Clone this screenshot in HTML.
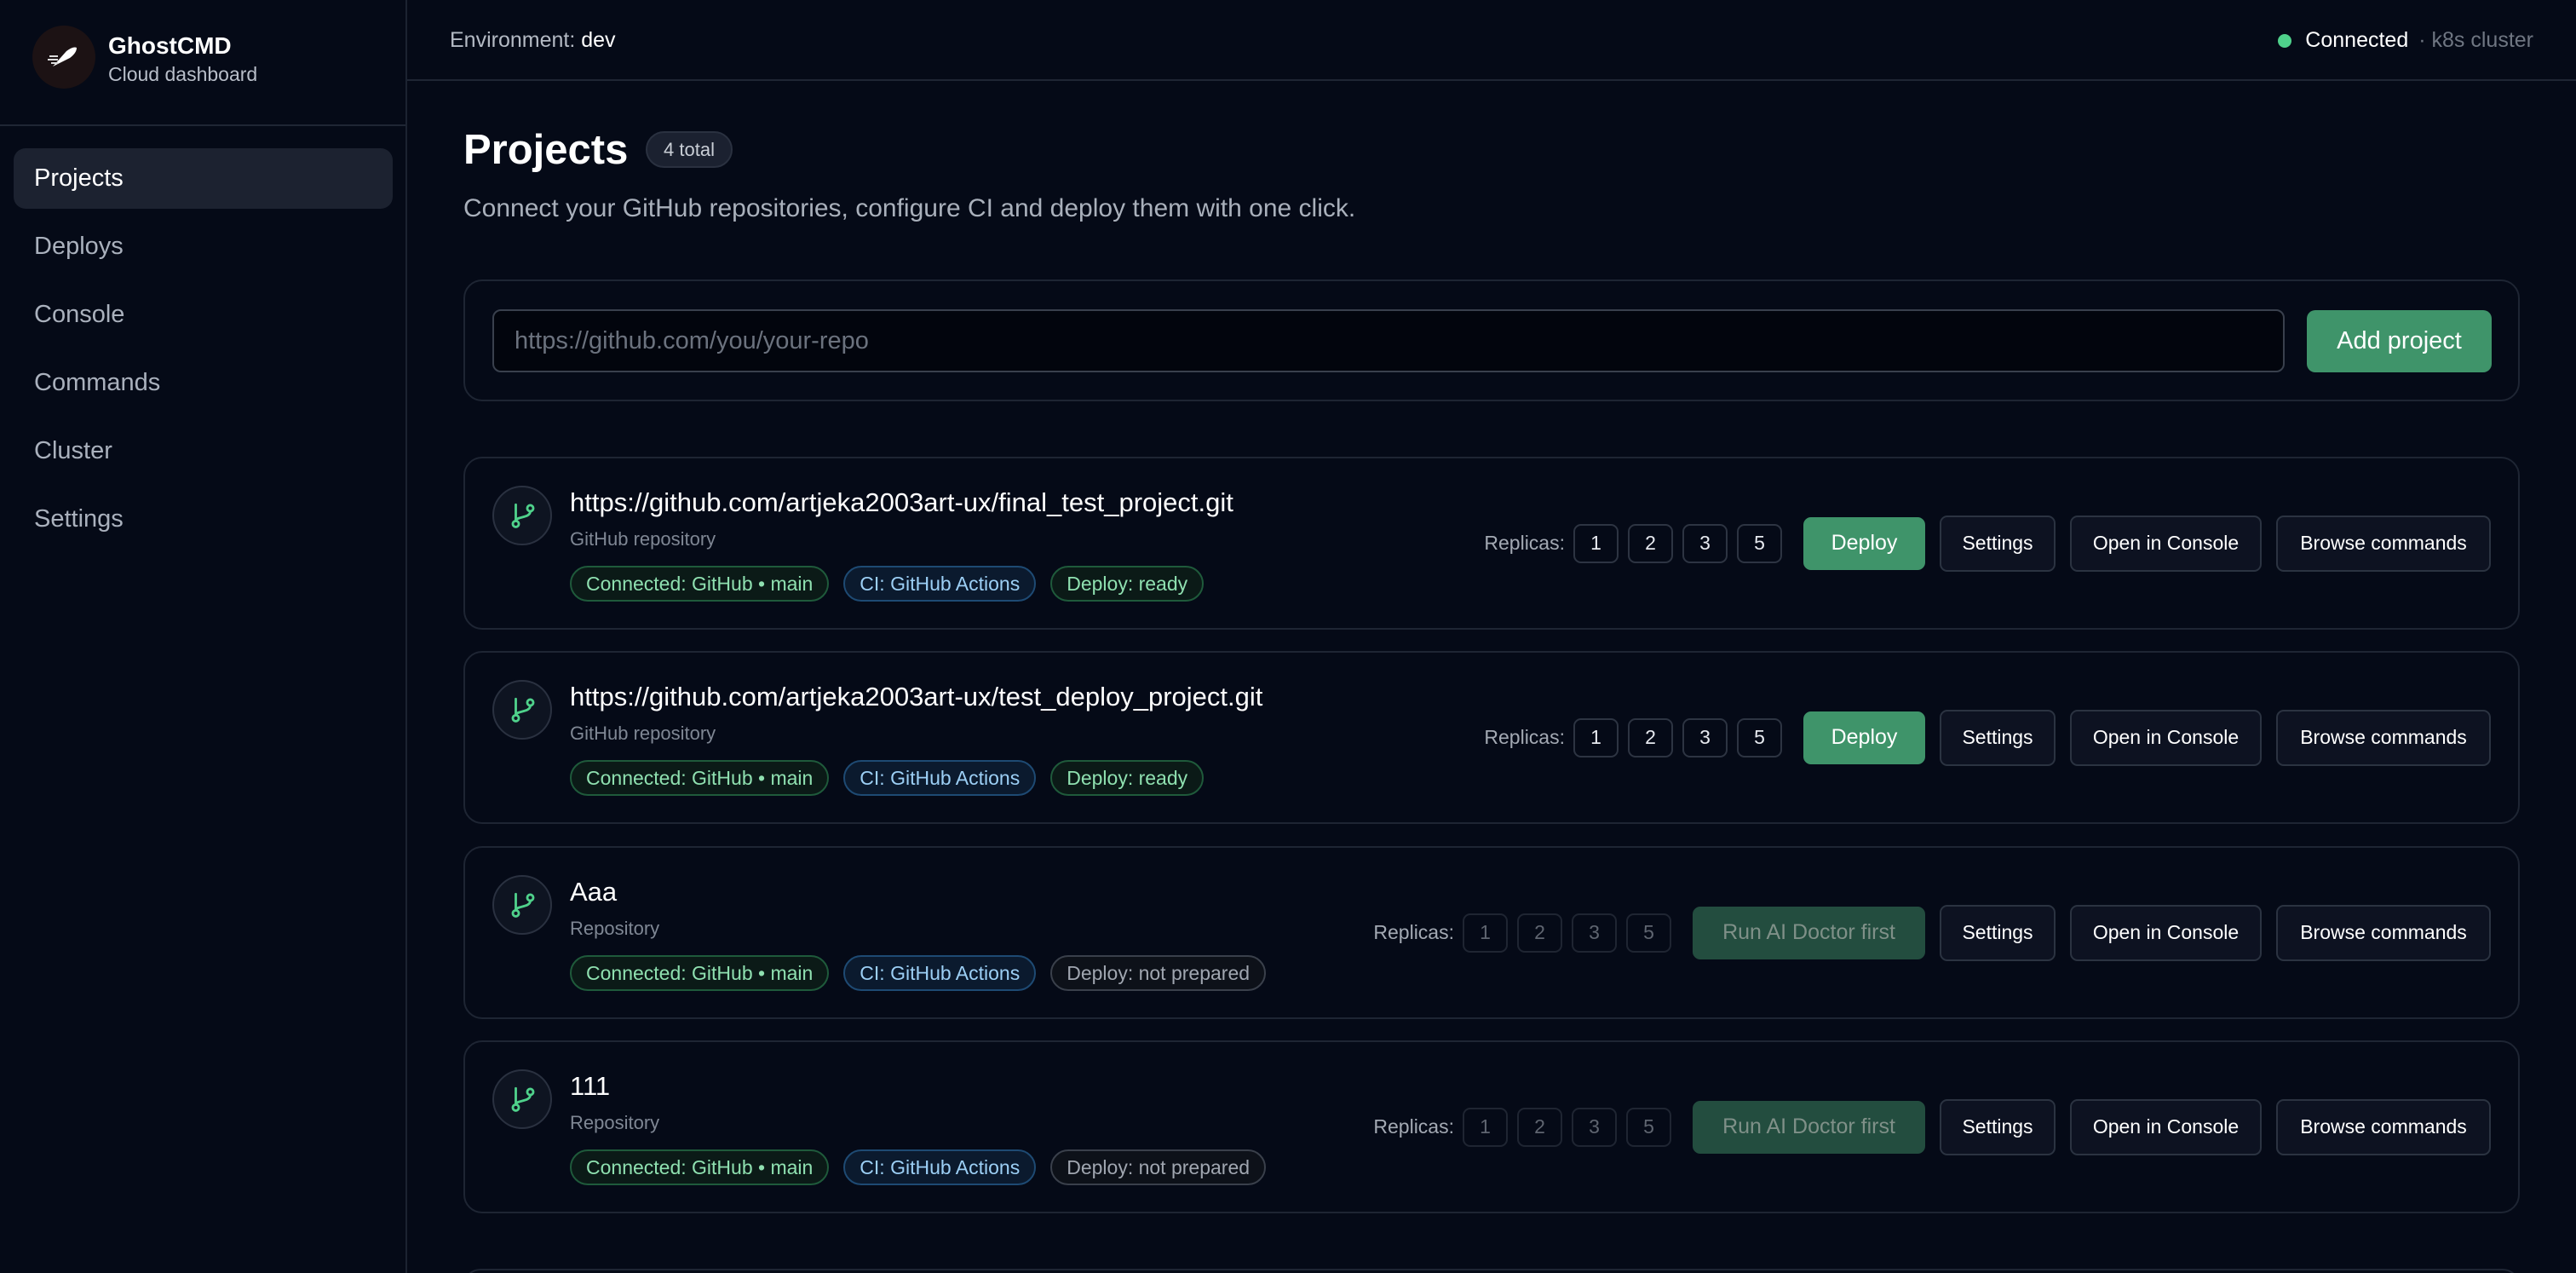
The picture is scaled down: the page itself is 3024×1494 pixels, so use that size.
<!DOCTYPE html>
<html><head><meta charset="utf-8"><style>
*{box-sizing:border-box;margin:0;padding:0}
html,body{width:3024px;height:1494px;overflow:hidden}
body{background:#050a17;font-family:"Liberation Sans",sans-serif;color:#e6e9ef;position:relative}
#wrap{position:absolute;left:0;top:0;width:3024px;height:1494px;overflow:hidden}
.side{position:absolute;left:0;top:0;width:478px;height:1494px;border-right:2px solid #1c2331;background:#050a17}
.brand{height:148px;border-bottom:2px solid #1f2634;position:relative}
.logo{position:absolute;left:38px;top:30px;width:74px;height:74px;border-radius:50%;background:#1c1214}
.bn{position:absolute;left:127px;top:38px;font-size:28px;font-weight:bold;color:#fff}
.bs{position:absolute;left:127px;top:74px;font-size:23px;color:#b8bec9}
.nav{position:absolute;left:40px;font-size:29px;color:#aab1bd}
.act{position:absolute;left:16px;top:174px;width:445px;height:71px;background:#1c2230;border-radius:14px}
.top{position:absolute;left:478px;top:0;right:0;height:95px;border-bottom:2px solid #1f2634}
.main{position:absolute;left:544px;}
.card{position:absolute;left:544px;width:2414px;border:2px solid #1e2533;border-radius:22px}
.pc{height:203px}
.ic{position:absolute;left:32px;top:32px;width:70px;height:70px;border-radius:50%;border:2px solid #2a3140;background:#0e1421}
.ic svg{position:absolute;left:17px;top:16px}
.t{position:absolute;left:123px;top:34px;font-size:31px;color:#fff}
.st{position:absolute;left:123px;top:82px;font-size:22px;color:#7f8794}
.tags{position:absolute;left:123px;top:126px;display:flex;gap:17px}
.tag{height:42px;border-radius:21px;padding:0 17px;font-size:23px;line-height:38px;border:2px solid}
.g{color:#8fe0b0;border-color:#1f5a3b;background:#0b1a17}
.b{color:#9ccff5;border-color:#1e4a73;background:#0b1a2e}
.n{color:#a0a6b0;border-color:#3a404b;background:#0d1119}
.acts{position:absolute;right:32px;top:0;height:100%;display:flex;align-items:center}
.rl{font-size:23px;color:#a3a9b3;margin-right:10px}
.r{width:53px;height:46px;border:2px solid #2d3442;border-radius:9px;font-size:23px;display:flex;align-items:center;justify-content:center;margin-right:11px;color:#e6e9ef}
.dis .r{color:#5f6570;border-color:#1f2532}
.btn{height:66px;border-radius:9px;font-size:23px;display:flex;align-items:center;justify-content:center;border:2px solid #2b3341;background:#0d1221;color:#fff;margin-left:17px}
.dep{background:#3f946a;border-color:#3f946a;font-size:25px;width:143px;margin-left:14px;height:62px}
.ai{background:#234d3f;border-color:#234d3f;color:#7f9088;font-size:25px;width:273px;margin-left:14px;height:62px}
</style></head><body><div id="wrap">
<div class="side">
 <div class="brand"><div class="logo"><svg width="74" height="74" viewBox="0 0 74 74"><path d="M24 48 L40 30 Q48 24 52 26 Q52 32 44 38 Z" fill="#fff"/><path d="M20 36h10M18 40h12M22 44h8" stroke="#ddd" stroke-width="2"/></svg></div>
 <div class="bn">GhostCMD</div><div class="bs">Cloud dashboard</div></div>
 <div class="act"></div>
 <div class="nav" style="top:193px;color:#fff">Projects</div>
 <div class="nav" style="top:273px">Deploys</div>
 <div class="nav" style="top:353px">Console</div>
 <div class="nav" style="top:433px">Commands</div>
 <div class="nav" style="top:513px">Cluster</div>
 <div class="nav" style="top:593px">Settings</div>
</div>
<div class="top">
 <div style="position:absolute;left:50px;top:33px;font-size:25px;color:#b4bac4">Environment: <span style="color:#fff">dev</span></div>
 <div style="position:absolute;right:50px;top:33px;font-size:25px;color:#fff;display:flex;align-items:center"><span style="width:16px;height:16px;border-radius:50%;background:#4fd18b;margin-right:16px;display:inline-block"></span>Connected<span style="color:#6f7682;margin-left:12px">· k8s cluster</span></div>
</div>
<div class="main" style="top:148px;font-size:49px;font-weight:bold;color:#fff">Projects</div>
<div style="position:absolute;left:758px;top:154px;width:102px;height:43px;border-radius:22px;background:#1b2130;border:2px solid #2a3140;font-size:22px;color:#c9ced6;text-align:center;line-height:39px">4 total</div>
<div class="main" style="top:228px;font-size:30px;color:#a9b0bb">Connect your GitHub repositories, configure CI and deploy them with one click.</div>
<div class="card" style="top:328px;height:143px">
 <div style="position:absolute;left:32px;top:33px;width:2104px;height:74px;border:2px solid #39404d;border-radius:10px;background:#02050d;font-size:29px;color:#6b727e;padding-left:24px;line-height:70px">https://github.com/you/your-repo</div>
 <div style="position:absolute;left:2162px;top:34px;width:217px;height:73px;border-radius:10px;background:#3f946a;color:#fff;font-size:29px;text-align:center;line-height:73px">Add project</div>
</div>

<div class="card pc" style="top:536px">
 <div class="ic"><svg width="34" height="34" viewBox="0 0 24 24" fill="none" stroke="#4fd18b" stroke-width="2" stroke-linecap="round"><circle cx="6" cy="19" r="2.5"/><circle cx="18" cy="6" r="2.5"/><path d="M6 3v13.5M18 8.5c0 6-12 4-12 8"/></svg></div>
 <div class="t">https://github.com/artjeka2003art-ux/final_test_project.git</div>
 <div class="st">GitHub repository</div>
 <div class="tags"><div class="tag g">Connected: GitHub • main</div><div class="tag b">CI: GitHub Actions</div><div class="tag g">Deploy: ready</div></div>
 <div class="acts"><span class="rl">Replicas:</span><div class="r">1</div><div class="r">2</div><div class="r">3</div><div class="r">5</div><div class="btn dep">Deploy</div><div class="btn" style="width:136px">Settings</div><div class="btn" style="width:225px">Open in Console</div><div class="btn" style="width:252px">Browse commands</div></div>
</div>
<div class="card pc" style="top:764px">
 <div class="ic"><svg width="34" height="34" viewBox="0 0 24 24" fill="none" stroke="#4fd18b" stroke-width="2" stroke-linecap="round"><circle cx="6" cy="19" r="2.5"/><circle cx="18" cy="6" r="2.5"/><path d="M6 3v13.5M18 8.5c0 6-12 4-12 8"/></svg></div>
 <div class="t">https://github.com/artjeka2003art-ux/test_deploy_project.git</div>
 <div class="st">GitHub repository</div>
 <div class="tags"><div class="tag g">Connected: GitHub • main</div><div class="tag b">CI: GitHub Actions</div><div class="tag g">Deploy: ready</div></div>
 <div class="acts"><span class="rl">Replicas:</span><div class="r">1</div><div class="r">2</div><div class="r">3</div><div class="r">5</div><div class="btn dep">Deploy</div><div class="btn" style="width:136px">Settings</div><div class="btn" style="width:225px">Open in Console</div><div class="btn" style="width:252px">Browse commands</div></div>
</div>
<div class="card pc" style="top:993px">
 <div class="ic"><svg width="34" height="34" viewBox="0 0 24 24" fill="none" stroke="#4fd18b" stroke-width="2" stroke-linecap="round"><circle cx="6" cy="19" r="2.5"/><circle cx="18" cy="6" r="2.5"/><path d="M6 3v13.5M18 8.5c0 6-12 4-12 8"/></svg></div>
 <div class="t">Aaa</div>
 <div class="st">Repository</div>
 <div class="tags"><div class="tag g">Connected: GitHub • main</div><div class="tag b">CI: GitHub Actions</div><div class="tag n">Deploy: not prepared</div></div>
 <div class="acts dis"><span class="rl">Replicas:</span><div class="r">1</div><div class="r">2</div><div class="r">3</div><div class="r">5</div><div class="btn ai">Run AI Doctor first</div><div class="btn" style="width:136px">Settings</div><div class="btn" style="width:225px">Open in Console</div><div class="btn" style="width:252px">Browse commands</div></div>
</div>
<div class="card pc" style="top:1221px">
 <div class="ic"><svg width="34" height="34" viewBox="0 0 24 24" fill="none" stroke="#4fd18b" stroke-width="2" stroke-linecap="round"><circle cx="6" cy="19" r="2.5"/><circle cx="18" cy="6" r="2.5"/><path d="M6 3v13.5M18 8.5c0 6-12 4-12 8"/></svg></div>
 <div class="t">111</div>
 <div class="st">Repository</div>
 <div class="tags"><div class="tag g">Connected: GitHub • main</div><div class="tag b">CI: GitHub Actions</div><div class="tag n">Deploy: not prepared</div></div>
 <div class="acts dis"><span class="rl">Replicas:</span><div class="r">1</div><div class="r">2</div><div class="r">3</div><div class="r">5</div><div class="btn ai">Run AI Doctor first</div><div class="btn" style="width:136px">Settings</div><div class="btn" style="width:225px">Open in Console</div><div class="btn" style="width:252px">Browse commands</div></div>
</div>
<div class="card" style="top:1489px;height:40px"></div>
</div></body></html>
